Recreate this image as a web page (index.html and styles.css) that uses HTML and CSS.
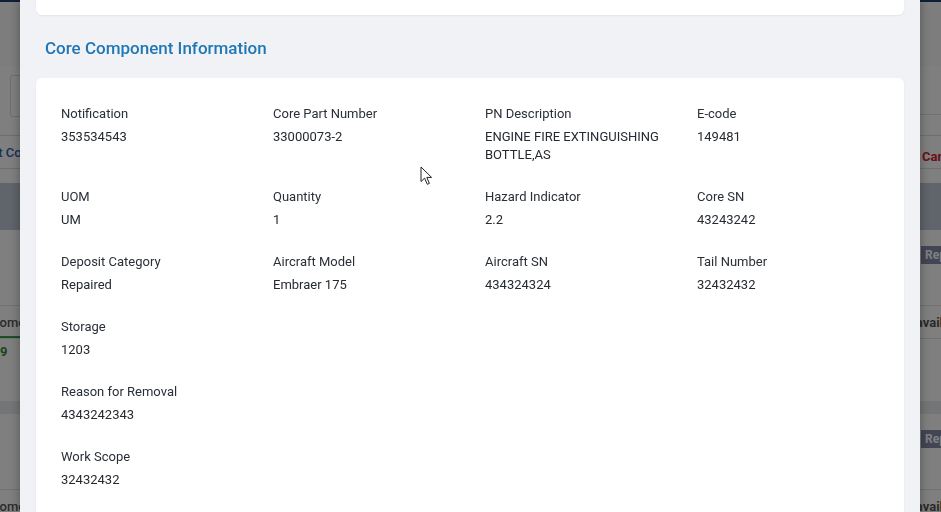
FILE: index.html
```html
<!DOCTYPE html>
<html lang="en">
<head>
<meta charset="utf-8">
<title>Core Component Information</title>
<link rel="stylesheet" href="styles.css">
</head>
<body>
<div class="page">
  <div class="topbar"></div>
  <div class="top-space"></div>
  <div class="row filters">
    <div class="left"><div class="input"></div></div>
    <div class="right"><div class="input-r"></div></div>
  </div>
  <div class="row tabs">
    <div class="left"><span class="tab-text">Part Core</span></div>
    <div class="right"><span class="cancel">Cancel</span></div>
  </div>
  <div class="gap"></div>
  <div class="thead"></div>
  <div class="block">
    <div class="row badge-row">
      <div class="left"></div>
      <div class="right"><span class="badge">Repaired</span></div>
    </div>
    <div class="row sub-row">
      <div class="left active"><span class="cust">Customer</span></div>
      <div class="right"><span class="avail">Unavailable</span></div>
    </div>
    <div class="row num-row">
      <div class="left"><span class="num">9</span></div>
      <div class="right"></div>
    </div>
  </div>
  <div class="band"></div>
  <div class="block">
    <div class="row badge-row">
      <div class="left"></div>
      <div class="right"><span class="badge">Repaired</span></div>
    </div>
    <div class="row sub-row">
      <div class="left active"><span class="cust">Customer</span></div>
      <div class="right"><span class="avail">Unavailable</span></div>
    </div>
  </div>
</div>

<div class="overlay"></div>

<div class="modal">
  <div class="card card-top"></div>
  <h2 class="section-title">Core Component Information</h2>
  <div class="card info">
    <div class="field"><div class="label">Notification</div><div class="value">353534543</div></div>
    <div class="field"><div class="label">Core Part Number</div><div class="value">33000073-2</div></div>
    <div class="field"><div class="label">PN Description</div><div class="value">ENGINE FIRE EXTINGUISHING BOTTLE,AS</div></div>
    <div class="field"><div class="label">E-code</div><div class="value">149481</div></div>

    <div class="field"><div class="label">UOM</div><div class="value">UM</div></div>
    <div class="field"><div class="label">Quantity</div><div class="value">1</div></div>
    <div class="field"><div class="label">Hazard Indicator</div><div class="value">2.2</div></div>
    <div class="field"><div class="label">Core SN</div><div class="value">43243242</div></div>

    <div class="field"><div class="label">Deposit Category</div><div class="value">Repaired</div></div>
    <div class="field"><div class="label">Aircraft Model</div><div class="value">Embraer 175</div></div>
    <div class="field"><div class="label">Aircraft SN</div><div class="value">434324324</div></div>
    <div class="field"><div class="label">Tail Number</div><div class="value">32432432</div></div>

    <div class="field wide"><div class="label">Storage</div><div class="value">1203</div></div>
    <div class="field wide"><div class="label">Reason for Removal</div><div class="value">4343242343</div></div>
    <div class="field wide"><div class="label">Work Scope</div><div class="value">32432432</div></div>
  </div>
</div>

<svg class="cursor" width="13" height="20" viewBox="0 0 13 20" aria-hidden="true">
  <path d="M1 1 L1 15.5 L4.6 12.2 L7.3 18.3 L9.4 17.4 L6.8 11.4 L11.6 11.4 Z" fill="#fff" stroke="#222" stroke-width="1" stroke-linejoin="round"/>
</svg>
</body>
</html>
```
FILE: styles.css
```css
html, body {
  margin: 0;
  padding: 0;
  height: 100%;
  overflow: hidden;
}
body {
  font-family: Roboto, "Liberation Sans", Arial, sans-serif;
  font-size: 13px;
  background: #fff;
  color: #252a31;
}

/* ---------- background page (under the overlay) ---------- */
.page {
  width: 941px;
}
.topbar {
  height: 2px;
  background: #1d3d72;
}
.top-space {
  height: 64px;
  background: #fafafa;
}
.row {
  display: flex;
}
.row .left {
  flex: 0 0 920px;
  display: flex;
  align-items: center;
}
.row .right {
  flex: 1 1 auto;
  display: flex;
  align-items: center;
}
.filters {
  height: 69px;
  background: #fff;
}
.filters .left {
  align-items: flex-start;
}
.input {
  margin: 9px 0 0 10px;
  width: 200px;
  height: 40px;
  border: 1px solid #d9dde2;
  border-radius: 2px;
}
.filters .right {
  align-items: flex-start;
}
.input-r {
  width: 100%;
  height: 48px;
  background: #fff;
  border-bottom: 1px solid #e0e0e0;
}
.tabs {
  height: 32px;
  border-top: 1px solid #d8dde3;
  border-bottom: 1px solid #d8dde3;
  background: #fff;
}
.tab-text {
  margin-left: -22px;
  font-size: 13px;
  font-weight: 500;
  color: #2c5fb0;
  white-space: nowrap;
}
.cancel {
  margin-left: 2px;
  font-weight: 700;
  color: #d42323;
  white-space: nowrap;
  padding-top: 8px;
}
.gap {
  height: 14px;
  background: #fff;
}
.thead {
  height: 47px;
  background: #bfcad6;
}
.block {
  height: 155px;
  background: #fff;
}
.badge-row {
  height: 18px;
  margin-top: 16px;
}
.badge {
  display: inline-block;
  margin-left: 1px;
  height: 18px;
  line-height: 18px;
  padding: 0 4px;
  background: #858aa8;
  color: #fff;
  font-weight: 700;
  font-size: 12px;
  white-space: nowrap;
}
.sub-row {
  margin-top: 41px;
  height: 32px;
  border-top: 1px solid #e3e3e3;
  border-bottom: 1px solid #e3e3e3;
}
.sub-row .left.active {
  box-shadow: inset 0 -2px 0 #3a9d4d;
}
.cust {
  margin-left: -27px;
  color: #555;
  font-weight: 500;
  white-space: nowrap;
}
.avail {
  margin-left: -20px;
  color: #555;
  font-weight: 700;
  white-space: nowrap;
}
.num-row {
  height: 24px;
}
.num {
  font-weight: 700;
  color: #2f8a43;
}
.band {
  height: 13px;
  background: #e9ebed;
}

/* ---------- overlay + modal ---------- */
.overlay {
  position: fixed;
  inset: 0;
  background: rgba(0, 0, 0, 0.5);
}
.modal {
  position: fixed;
  top: 0;
  bottom: 0;
  left: 20px;
  width: 900px;
  box-sizing: border-box;
  padding: 0 16px;
  background: #f0f2f5;
  box-shadow: 0 0 10px rgba(0, 0, 0, 0.35);
  overflow: hidden;
}
.card {
  background: #fff;
  border-radius: 6px;
  box-shadow: 0 1px 2px rgba(0, 0, 0, 0.06);
}
.card-top {
  height: 15px;
  border-radius: 0 0 6px 6px;
}
.section-title {
  margin: 21px 0 18px 9px;
  font-size: 17px;
  line-height: 24px;
  font-weight: 500;
  color: #1f77b6;
}
.info {
  display: grid;
  grid-template-columns: repeat(4, 212px);
  row-gap: 24px;
  padding: 27px 0 30px 25px;
}
.field {
  padding-right: 20px;
}
.field.wide {
  grid-column: 1 / -1;
}
.label {
  line-height: 18px;
  color: #2a3038;
}
.value {
  margin-top: 5px;
  line-height: 18px;
  color: #252a31;
}

.cursor {
  position: fixed;
  left: 420px;
  top: 166px;
}
```
